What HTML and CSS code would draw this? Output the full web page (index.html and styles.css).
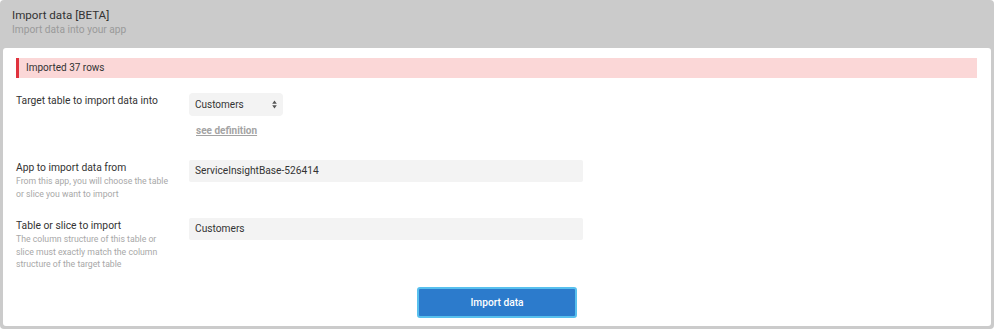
FILE: index.html
```html
<!DOCTYPE html>
<html>
<head>
<meta charset="utf-8">
<link rel="stylesheet" href="styles.css">
</head>
<body>
<div class="panel">
  <div class="panel-head">
    <div class="title">Import data [BETA]</div>
    <div class="subtitle">Import data into your app</div>
  </div>
  <div class="panel-body">
    <div class="alert">Imported 37 rows</div>
    <div class="row row-1">
      <div class="label-col">
        <div class="label">Target table to import data into</div>
      </div>
      <div class="field-col">
        <div class="select">
          <span>Customers</span>
          <svg class="arrows" width="5" height="9" viewBox="0 0 5 9"><path d="M2.5 0.5 L4.8 3.8 H0.2 Z M2.5 8.5 L4.8 5.2 H0.2 Z" fill="#555"/></svg>
        </div>
        <a class="def-link">see definition</a>
      </div>
    </div>
    <div class="row row-2">
      <div class="label-col">
        <div class="label">App to import data from</div>
        <div class="desc">From this app, you will choose the table<br>or slice you want to import</div>
      </div>
      <div class="field-col">
        <div class="input">ServiceInsightBase-526414</div>
      </div>
    </div>
    <div class="row row-3">
      <div class="label-col">
        <div class="label">Table or slice to import</div>
        <div class="desc">The column structure of this table or<br>slice must exactly match the column<br>structure of the target table</div>
      </div>
      <div class="field-col">
        <div class="input">Customers</div>
      </div>
    </div>
    <div class="actions">
      <button class="btn">Import data</button>
    </div>
  </div>
</div>
</body>
</html>
```

FILE: styles.css
```css
* { box-sizing: border-box; }
body {
  margin: 0;
  background: #fff;
  font-family: Roboto, "Liberation Sans", sans-serif;
  color: #333;
}
.panel {
  width: 994px;
  background: #cbcbcb;
  border-radius: 4px;
  padding: 0 3px 3px 3px;
}
.panel-head {
  height: 48px;
  padding: 8px 0 0 9px;
}
.title {
  font-size: 11.6px;
  line-height: 15px;
  color: #333;
}
.subtitle {
  font-size: 10.2px;
  line-height: 14px;
  color: #9a9a9a;
}
.panel-body {
  background: #fff;
  border-radius: 3px;
  padding: 10px 14px 8px 13px;
}
.alert {
  height: 20px;
  background: #fbd7d7;
  border-left: 3px solid #e0323d;
  padding-left: 7px;
  font-size: 10px;
  line-height: 20px;
  color: #333;
}
.row {
  display: flex;
  align-items: flex-start;
}
.row-1 { margin-top: 15px; }
.row-2 { margin-top: 22px; }
.row-3 { margin-top: 18px; }
.label-col {
  width: 173px;
  flex: none;
}
.label {
  font-size: 10.3px;
  line-height: 15px;
  color: #333;
  white-space: nowrap;
}
.desc {
  font-size: 8.7px;
  line-height: 12.5px;
  color: #a8a8a8;
  white-space: nowrap;
}
.field-col {
  display: flex;
  flex-direction: column;
  align-items: flex-start;
}
.select {
  width: 94px;
  height: 23px;
  background: #f3f3f3;
  border-radius: 4px;
  display: flex;
  align-items: center;
  justify-content: space-between;
  padding: 0 6px 0 6px;
  font-size: 10px;
  color: #333;
}
.arrows { display: block; }
.def-link {
  margin: 8px 0 0 7px;
  font-size: 10px;
  line-height: 14px;
  font-weight: 700;
  color: #a3a3a3;
  text-decoration: underline;
}
.input {
  width: 394px;
  height: 22px;
  background: #f3f3f3;
  border-radius: 2px;
  padding-left: 6px;
  font-size: 10.2px;
  line-height: 22px;
  color: #333;
}
.actions {
  display: flex;
  justify-content: center;
  margin-top: 16px;
  padding-left: 1px;
}
.btn {
  width: 160px;
  height: 31px;
  background: #2c7bcc;
  border: 2px solid #58c0ee;
  border-radius: 3px;
  color: #fff;
  font-family: Roboto, "Liberation Sans", sans-serif;
  font-size: 10.2px;
  font-weight: 500;
}
```
